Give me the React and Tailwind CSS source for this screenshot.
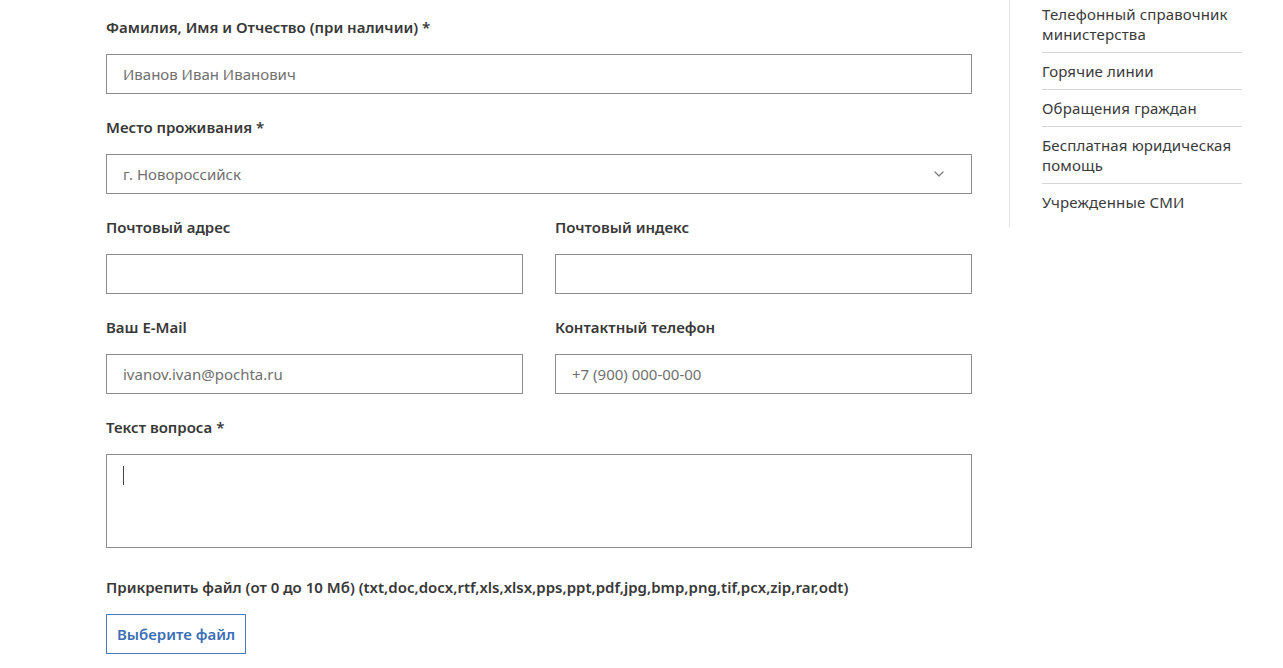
import { ChevronDown } from 'lucide-react';

const font = { fontFamily: '"Noto Sans", "Open Sans", sans-serif' };

const Label = ({ children }) => (
  <div className="text-[15px] leading-5 font-semibold text-[#383838] mb-[17px]">{children}</div>
);

const Field = ({ label, placeholder }) => (
  <div className="flex flex-col">
    <Label>{label}</Label>
    <input
      className="h-10 w-full border border-[#8c8c8c] px-4 text-[15px] text-[#333] placeholder:text-[#707070] outline-none"
      placeholder={placeholder}
    />
  </div>
);

const links = [
  'Телефонный справочник министерства',
  'Горячие линии',
  'Обращения граждан',
  'Бесплатная юридическая помощь',
  'Учрежденные СМИ',
];

export default function App() {
  return (
    <div className="flex bg-white min-h-[668px]" style={font}>
      <main className="ml-[106px] w-[866px] pt-[17px] flex flex-col">
        <Field label="Фамилия, Имя и Отчество (при наличии) *" placeholder="Иванов Иван Иванович" />

        <div className="mt-[23px] flex flex-col">
          <Label>Место проживания *</Label>
          <div className="h-10 border border-[#8c8c8c] px-4 flex items-center justify-between">
            <span className="text-[15px] text-[#707070]">г. Новороссийск</span>
            <ChevronDown className="w-4 h-4 text-[#777] mr-[8px]" strokeWidth={1.8} />
          </div>
        </div>

        <div className="mt-[23px] grid grid-cols-2 gap-x-8 gap-y-[23px]">
          <Field label="Почтовый адрес" placeholder="" />
          <Field label="Почтовый индекс" placeholder="" />
          <Field label="Ваш E-Mail" placeholder="ivanov.ivan@pochta.ru" />
          <Field label="Контактный телефон" placeholder="+7 (900) 000-00-00" />
        </div>

        <div className="mt-[23px] flex flex-col">
          <Label>Текст вопроса *</Label>
          <div className="h-[94px] border border-[#8c8c8c] px-4 pt-[11px]">
            <div className="w-px h-[19px] bg-[#444]" />
          </div>
        </div>

        <div className="mt-[29px] flex flex-col">
          <Label>Прикрепить файл (от 0 до 10 Мб) (txt,doc,docx,rtf,xls,xlsx,pps,ppt,pdf,jpg,bmp,png,tif,pcx,zip,rar,odt)</Label>
          <button className="w-[140px] h-10 border border-[#4a7bbd] text-[#3b6fb6] text-[15px] font-semibold">
            Выберите файл
          </button>
        </div>
      </main>

      <aside className="ml-[37px] self-start border-l border-[#e3e3e3] pl-[32px] pb-[8px]">
        <ul className="w-[200px] -mt-[4px]">
          {links.map((l, i) => (
            <li
              key={l}
              className={`py-2 text-[15px] leading-5 tracking-[0.01em] text-[#3a3a3a] ${i < links.length - 1 ? 'border-b border-[#d6d6d6]' : ''}`}
            >
              {l}
            </li>
          ))}
        </ul>
      </aside>
    </div>
  );
}
